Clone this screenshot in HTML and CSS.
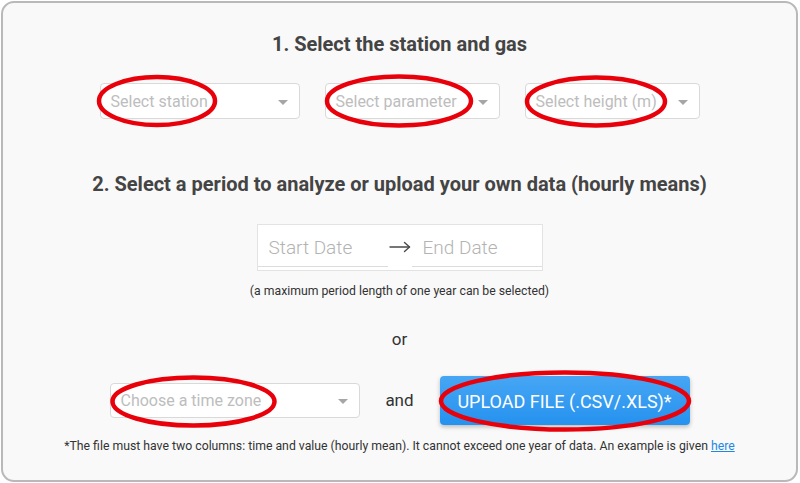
FILE: index.html
```html
<!DOCTYPE html>
<html>
<head>
<meta charset="utf-8">
<link rel="stylesheet" href="styles.css">
</head>
<body>
<div class="card">
  <h2 class="title t1">1. Select the station and gas</h2>
  <div class="row selects">
    <div class="select w200"><span class="ph">Select station</span><span class="caret"></span></div>
    <div class="select w175"><span class="ph">Select parameter</span><span class="caret"></span></div>
    <div class="select w175"><span class="ph">Select height (m)</span><span class="caret"></span></div>
  </div>
  <h2 class="title t2">2. Select a period to analyze or upload your own data (hourly means)</h2>
  <div class="range">
    <div class="date">Start Date</div>
    <div class="arrow"><svg width="22" height="12" viewBox="0 0 22 12"><g fill="none" stroke="#4a4a4a" stroke-width="1.4" stroke-linecap="round" stroke-linejoin="round"><path d="M1 6 H20.5"/><path d="M15.5 1.5 L20.5 6 L15.5 10.5"/></g></svg></div>
    <div class="date">End Date</div>
  </div>
  <div class="note">(a maximum period length of one year can be selected)</div>
  <div class="or">or</div>
  <div class="row upload">
    <div class="select w250 tz"><span class="ph">Choose a time zone</span><span class="caret"></span></div>
    <span class="and">and</span>
    <button class="btn">UPLOAD FILE (.CSV/.XLS)*</button>
  </div>
  <div class="foot">*The file must have two columns: time and value (hourly mean). It cannot exceed one year of data. An example is given <a href="#">here</a></div>

  <svg class="marks" width="800" height="483" viewBox="0 0 800 483">
    <g fill="none" stroke="#e8000b" stroke-width="4.5">
      <ellipse cx="157" cy="101" rx="58" ry="24"/>
      <ellipse cx="399" cy="101" rx="72" ry="24.5"/>
      <ellipse cx="596" cy="101.5" rx="69" ry="24"/>
      <ellipse cx="193.5" cy="401.5" rx="81" ry="24"/>
      <ellipse cx="565" cy="401" rx="124" ry="28.5"/>
    </g>
  </svg>
</div>
</body>
</html>
```
FILE: styles.css
```css
html, body {
  margin: 0;
  padding: 0;
  background: #ffffff;
}
body {
  font-family: Roboto, "Liberation Sans", Arial, sans-serif;
  color: #333;
}
.card {
  position: relative;
  box-sizing: border-box;
  margin: 1px 0 0 1px;
  width: 797px;
  height: 481px;
  border: 2px solid #b9b9b9;
  border-radius: 13px;
  background: #f9f9f9;
  display: flex;
  flex-direction: column;
  align-items: center;
  padding-top: 29px;
}
.title {
  margin: 0;
  font-size: 20px;
  line-height: 24px;
  font-weight: 700;
  color: #444;
}
.row {
  display: flex;
  align-items: center;
  gap: 25px;
}
.selects {
  margin-top: 27px;
}
.select {
  box-sizing: border-box;
  height: 36px;
  border: 1px solid #d9d9d9;
  border-radius: 4px;
  background: #fff;
  display: flex;
  align-items: center;
  justify-content: space-between;
  padding: 0 11px 0 10px;
}
.w200 { width: 200px; }
.w175 { width: 175px; }
.w250 { width: 250px; }
.ph {
  font-size: 16px;
  color: #bdbdbd;
  white-space: nowrap;
}
.caret {
  width: 0;
  height: 0;
  border-left: 5px solid transparent;
  border-right: 5px solid transparent;
  border-top: 5px solid #a6a6a6;
  margin-top: 2px;
}
.t2 {
  margin-top: 53px;
}
.range {
  margin-top: 28px;
  box-sizing: border-box;
  width: 286px;
  height: 47px;
  border: 1px solid #e3e3e3;
  background: #fff;
  display: flex;
  align-items: stretch;
  padding-bottom: 3px;
}
.date {
  width: 130px;
  border-bottom: 1px solid #dcdcdc;
  font-size: 19px;
  font-weight: 300;
  color: #b3b3b3;
  padding-left: 11px;
  padding-top: 3px;
  box-sizing: border-box;
  display: flex;
  align-items: center;
}
.arrow {
  width: 24px;
  display: flex;
  align-items: center;
  justify-content: center;
  padding-top: 2px;
}
.note {
  margin-top: 12px;
  font-size: 12.25px;
  line-height: 16px;
  color: #333;
}
.or {
  margin-top: 30px;
  font-size: 17px;
  line-height: 20px;
  color: #333;
}
.upload {
  margin-top: 26px;
  height: 50px;
}
.tz {
  height: 35px;
  margin-top: 1px;
}
.and {
  font-size: 17px;
  color: #333;
  width: 30px;
  text-align: center;
}
.btn {
  width: 250px;
  height: 49px;
  border: none;
  border-radius: 4px;
  background: linear-gradient(#47a6f4, #2592ef);
  color: #fff;
  font-family: Roboto, "Liberation Sans", Arial, sans-serif;
  font-size: 18px;
  box-shadow: 0 2px 4px rgba(0,0,0,0.25);
  padding: 2px 0 0;
}
.foot {
  margin-top: 14px;
  font-size: 12.25px;
  line-height: 14px;
  color: #333;
}
.foot a {
  color: #1e88e5;
}
.marks {
  position: absolute;
  left: -3px;
  top: -3px;
  pointer-events: none;
}
```
